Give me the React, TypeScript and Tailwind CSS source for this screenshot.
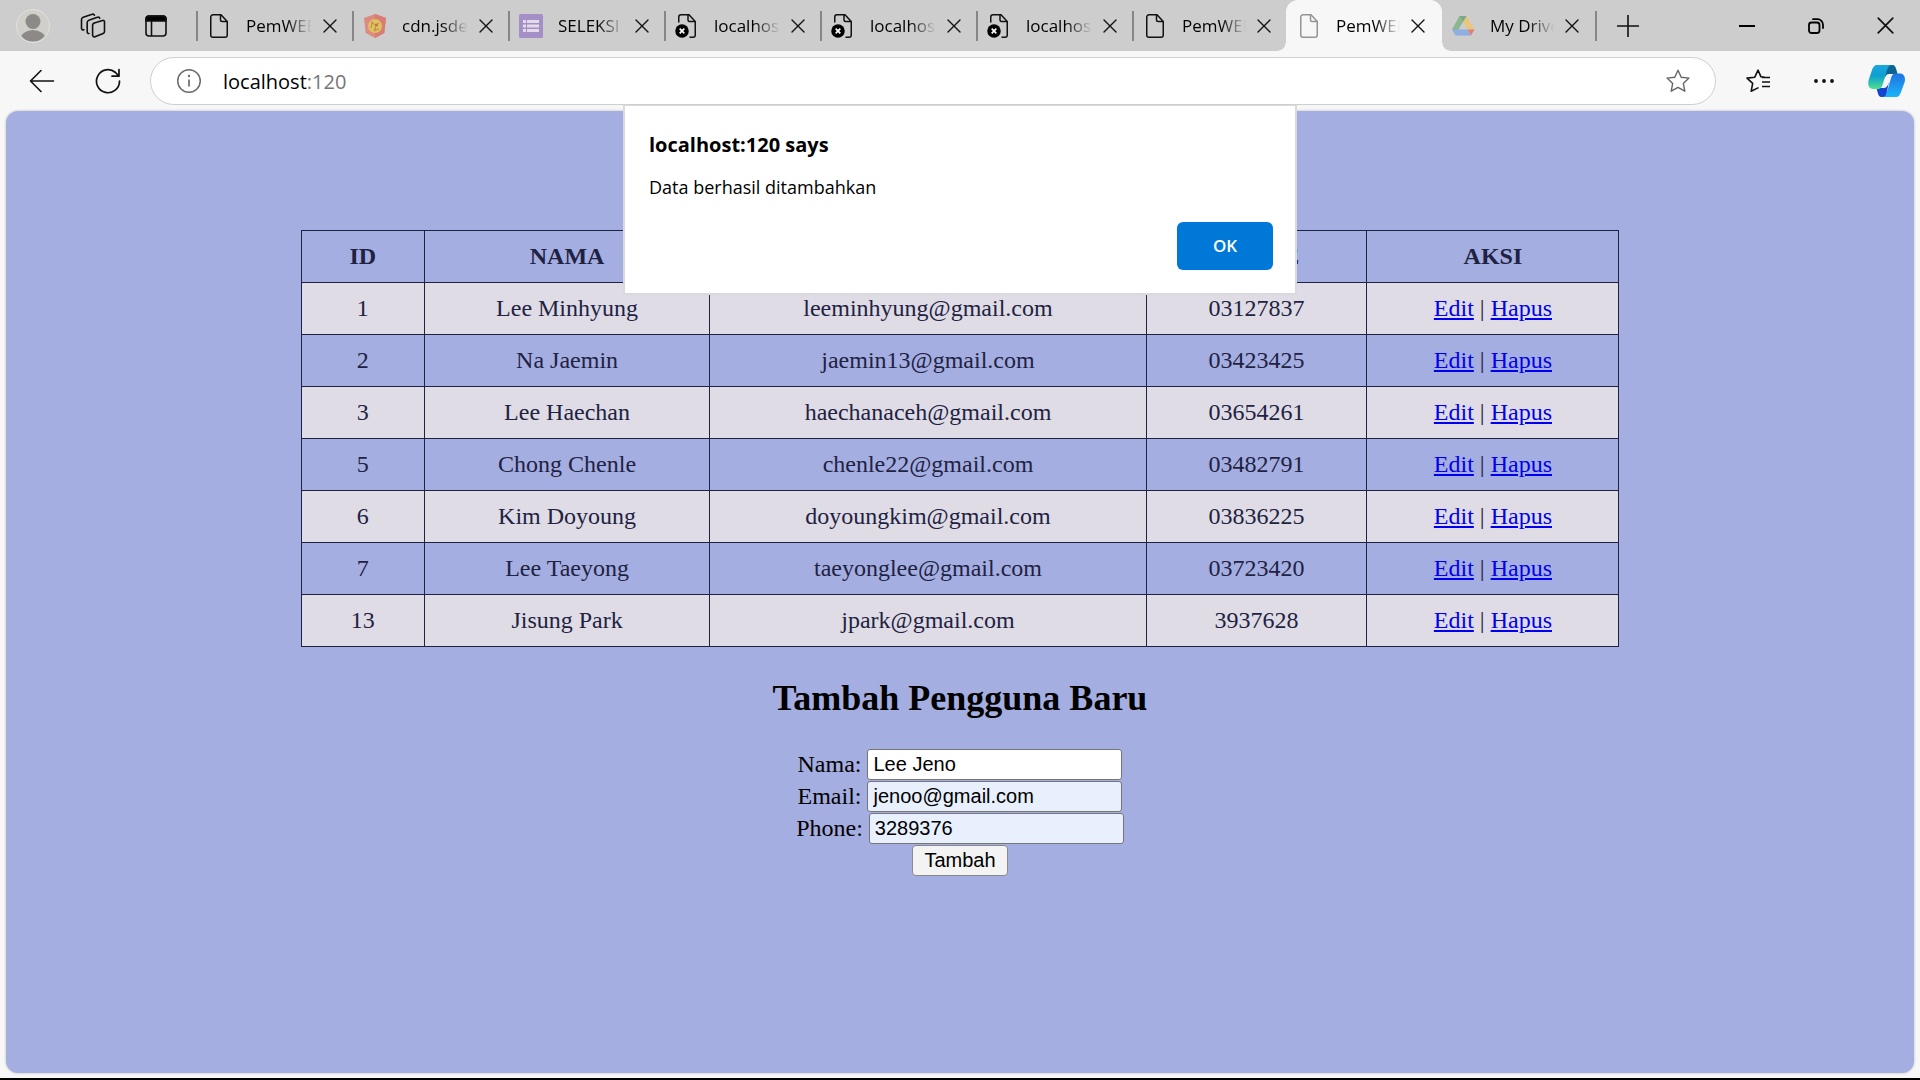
import React from "react";

type IconKind = "page" | "pageFaint" | "jsdelivr" | "forms" | "error" | "drive";
type Tab = { title: string; icon: IconKind; active?: boolean };
type User = { id: number; nama: string; email: string; phone: string };

const tabs: Tab[] = [
  { title: "PemWEB", icon: "page" },
  { title: "cdn.jsdelivr", icon: "jsdelivr" },
  { title: "SELEKSI A", icon: "forms" },
  { title: "localhost", icon: "error" },
  { title: "localhost", icon: "error" },
  { title: "localhost", icon: "error" },
  { title: "PemWEB", icon: "page" },
  { title: "PemWEB", icon: "pageFaint", active: true },
  { title: "My Drive", icon: "drive" },
];

const users: User[] = [
  { id: 1, nama: "Lee Minhyung", email: "leeminhyung@gmail.com", phone: "03127837" },
  { id: 2, nama: "Na Jaemin", email: "jaemin13@gmail.com", phone: "03423425" },
  { id: 3, nama: "Lee Haechan", email: "haechanaceh@gmail.com", phone: "03654261" },
  { id: 5, nama: "Chong Chenle", email: "chenle22@gmail.com", phone: "03482791" },
  { id: 6, nama: "Kim Doyoung", email: "doyoungkim@gmail.com", phone: "03836225" },
  { id: 7, nama: "Lee Taeyong", email: "taeyonglee@gmail.com", phone: "03723420" },
  { id: 13, nama: "Jisung Park", email: "jpark@gmail.com", phone: "3937628" },
];

function TabIcon({ kind }: { kind: IconKind }) {
  if (kind === "page" || kind === "pageFaint") {
    return (
      <svg width="24" height="24" viewBox="-3 0 24 24" fill="none" stroke={kind === "page" ? "#111" : "#949494"} strokeWidth="1.5" strokeLinejoin="round">
        <path d="M3 .75h8L17.250 7.500V21a2.250 2.250 0 0 1-2.250 2.250H3A2.250 2.250 0 0 1 .75 21V3A2.250 2.250 0 0 1 3 .75z" />
        <path d="M10.500 .75V6a1.500 1.500 0 0 0 1.500 1.500h5.250" />
      </svg>
    );
  }
  if (kind === "error") {
    return (
      <svg width="24" height="24" viewBox="0 0 24 24" fill="none" stroke="#111" strokeWidth="1.500" strokeLinejoin="round">
        <path d="M3.750 8.500V3A2.250 2.250 0 0 1 6 .75h8L20.250 7.500v13.500A2.250 2.250 0 0 1 18 23.250h-3.500" />
        <path d="M13 .75V6a1.500 1.500 0 0 0 1.500 1.500h5.500" />
        <circle cx="7" cy="17" r="6.750" fill="#000" stroke="none" />
        <path d="M4.700 14.700l4.600 4.600M9.300 14.700l-4.600 4.600" stroke="#fff" strokeWidth="1.700" />
      </svg>
    );
  }
  if (kind === "jsdelivr") {
    return (
      <svg width="24" height="24" viewBox="0 0 24 24">
        <path d="M12 0l11 4-1.700 15L12 24 2.700 19 1 4z" fill="#dd8a80" />
        <path d="M12 0l11 4-1.700 15L12 24z" fill="#d97c75" />
        <circle cx="12" cy="12" r="7" fill="#dfc15f" />
        <path d="M9 9l4 2 3-2M13 11l-1 5M9 9l-1 5M12 16l4-1" stroke="#c08d48" strokeWidth="1" fill="none" />
        <circle cx="13.500" cy="11" r="1.500" fill="#b57d45" />
        <circle cx="9" cy="8.500" r="1" fill="#c4934d" />
        <circle cx="12" cy="16" r="1.300" fill="#c4934d" />
      </svg>
    );
  }
  if (kind === "forms") {
    return (
      <svg width="24" height="24" viewBox="0 0 24 24">
        <rect width="24" height="24" rx="1.500" fill="#a48fc6" />
        <path d="M4 6h3v3H4zM8 6h12v3H8zM4 10.500h3v3H4zM8 10.500h12v3H8zM4 15h3v3H4zM8 15h12v3H8z" fill="#e2dcea" />
      </svg>
    );
  }
  return (
    <svg width="24" height="24" viewBox="0 0 24 24">
      <path d="M8.500 2h7l-9 19L1 15.500z" fill="#88b792" />
      <path d="M8.500 2h7l8 13.500h-7z" fill="#e9c67c" />
      <path d="M8.500 2h7L12 8z" fill="#7ba886" />
      <path d="M12 8l4.500 7.500h-9z" fill="#cdcdcd" />
      <path d="M1 15.500h15.500L20 21.500H4.500z" fill="#8faee2" />
      <path d="M16.500 15.500h7L20 21.500z" fill="#dd8078" />
    </svg>
  );
}

function CloseIcon({ size = 14 }: { size?: number }) {
  return (
    <svg width={size} height={size} viewBox="0 0 14 14" stroke="#111" strokeWidth="1.400" strokeLinecap="round">
      <path d="M1 1l12 12M13 1L1 13" />
    </svg>
  );
}

function TabItem({ tab, beforeActive, last }: { tab: Tab; beforeActive: boolean; last: boolean }) {
  const compact = tab.active || beforeActive || last;
  return (
    <div
      className={
        tab.active
          ? "relative flex h-full w-[156px] items-center rounded-t-xl bg-[#f7f7f7] pl-[11px]"
          : beforeActive
            ? "flex h-full w-[152px] items-center pl-[9px]"
            : last
              ? "flex h-full w-[155px] items-center pl-[9px]"
              : "flex h-full w-[156px] items-center pl-[9px]"
      }
    >
      {tab.active && (
        <>
          <span className="absolute bottom-0 -left-2 size-2 bg-[radial-gradient(circle_at_0_0,transparent_7px,#f7f7f7_8px)]" />
          <span className="absolute -right-2 bottom-0 size-2 bg-[radial-gradient(circle_at_100%_0,transparent_7px,#f7f7f7_8px)]" />
        </>
      )}
      <TabIcon kind={tab.icon} />
      <span
        className={
          compact
            ? "ml-[15px] w-16 overflow-hidden text-[17px] leading-6 whitespace-nowrap [mask-image:linear-gradient(to_right,black_60%,transparent)]"
            : "ml-[15px] w-[66px] overflow-hidden text-[17px] leading-6 whitespace-nowrap [mask-image:linear-gradient(to_right,black_60%,transparent)]"
        }
      >
        {tab.title}
      </span>
      <button aria-label="Close tab" className="ml-2.5 flex size-4 items-center justify-center">
        <CloseIcon />
      </button>
      {!tab.active && !beforeActive && <span className="ml-auto h-[30px] w-0.5 bg-[#868686]" />}
    </div>
  );
}

function TitleBar() {
  return (
    <div className="flex h-[51px] items-center bg-[#cdcdcd]">
      <button aria-label="Profile" className="ml-4">
        <svg width="34" height="34" viewBox="0 0 34 34">
          <defs>
            <clipPath id="avatar"><circle cx="17" cy="17" r="15.500" /></clipPath>
          </defs>
          <circle cx="17" cy="17" r="16.500" fill="#d0cfca" stroke="#e2e1dd" />
          <g clipPath="url(#avatar)" fill="#8d8986">
            <circle cx="17" cy="12.500" r="7.500" />
            <ellipse cx="17" cy="30" rx="12.500" ry="9" />
          </g>
        </svg>
      </button>
      <button aria-label="Workspaces" className="ml-[30px]">
        <svg width="26" height="26" viewBox="0 0 26 26" fill="none" stroke="#111" strokeWidth="1.600" strokeLinejoin="round" strokeLinecap="round">
          <path d="M13.500 10.200l9-2.700a1.500 1.500 0 0 1 2 1.500v9.500a2 2 0 0 1-1.400 1.900l-8.100 3.300a1.700 1.700 0 0 1-2.400-1.600V12.200a2 2 0 0 1 1.400-2z" />
          <path d="M9 20.500a1.600 1.600 0 0 1-1.800-1.700V9.500a2.500 2.500 0 0 1 1.700-2.300l8.500-3a1.700 1.700 0 0 1 2.300 1" />
          <path d="M3.800 16.700A1.600 1.600 0 0 1 1.500 15V6.500a2.500 2.500 0 0 1 1.700-2.300l9-2.900a1.700 1.700 0 0 1 2.200.9" />
        </svg>
      </button>
      <button aria-label="Tab actions" className="ml-[39px]">
        <svg width="22" height="22" viewBox="0 0 22 22" fill="none" stroke="#111" strokeWidth="1.600">
          <rect x="1" y="1" width="20" height="20" rx="3" />
          <path d="M1 6V4a3 3 0 0 1 3-3h14a3 3 0 0 1 3 3v2z" fill="#000" />
          <path d="M6.500 6v15" />
        </svg>
      </button>
      <span className="ml-[29px] h-[30px] w-0.5 bg-[#868686]" />
      <div className="flex h-full items-center">
        {tabs.map((tab, i) => (
          <TabItem key={i} tab={tab} beforeActive={!!tabs[i + 1]?.active} last={i === tabs.length - 1} />
        ))}
      </div>
      <button aria-label="New tab" className="ml-5">
        <svg width="22" height="22" viewBox="0 0 22 22" stroke="#111" strokeWidth="1.600"><path d="M11 0v22M0 11h22" /></svg>
      </button>
      <div className="ml-auto flex items-center gap-[53px] pr-[26px]">
        <button aria-label="Minimize">
          <svg width="16" height="16" viewBox="0 0 16 16" stroke="#000" strokeWidth="2"><path d="M0 8h16" /></svg>
        </button>
        <button aria-label="Restore">
          <svg width="16" height="16" viewBox="0 0 16 16" fill="none" stroke="#000" strokeWidth="1.800" strokeLinecap="round">
            <rect x="1" y="4.500" width="10.500" height="10.500" rx="2.500" />
            <path d="M5 1.200h4.500a5.500 5.500 0 0 1 5.500 5.500V10" />
          </svg>
        </button>
        <button aria-label="Close window"><CloseIcon size={17} /></button>
      </div>
    </div>
  );
}

function Toolbar() {
  return (
    <div className="flex h-[60px] items-center pr-[15px] pl-[29px]">
      <button aria-label="Back">
        <svg width="26" height="24" viewBox="0 0 26 24" fill="none" stroke="#111" strokeWidth="1.600" strokeLinecap="round" strokeLinejoin="round">
          <path d="M12 1.500L1.500 12 12 22.500M1.500 12H24.500" />
        </svg>
      </button>
      <button aria-label="Refresh" className="ml-10">
        <svg width="26" height="26" viewBox="0 0 26 26" fill="none" stroke="#111" strokeWidth="1.700" strokeLinecap="round" strokeLinejoin="round">
          <path d="M24.500 13A11.500 11.500 0 1 1 20.500 4.500L24 8.200M24 1.500v6.700h-7" />
        </svg>
      </button>
      <div className="ml-[29px] flex h-12 flex-1 items-center rounded-full border border-[#cfcfcf] bg-white pr-[25px] pl-[26px]">
        <button aria-label="Site information">
          <svg width="24" height="24" viewBox="0 0 24 24" fill="none" stroke="#6b6b6b" strokeWidth="1.500">
            <circle cx="12" cy="12" r="11.250" />
            <path d="M12 10.500v7" strokeWidth="1.700" />
            <circle cx="12" cy="7" r="1.200" fill="#6b6b6b" stroke="none" />
          </svg>
        </button>
        <div className="ml-[22px] flex-1 pt-0.5 text-[20px] leading-7 text-black">
          localhost<span className="text-[#767676]">:120</span>
        </div>
        <button aria-label="Add to favorites">
          <svg width="24" height="24" viewBox="0 0 24 24" fill="none" stroke="#666" strokeWidth="1.400" strokeLinejoin="round">
            <path d="M12 1.200l3.200 7 7.800.9-5.700 5.300 1.500 7.800L12 18.400l-6.800 3.800 1.500-7.800L1 9.100l7.800-.9z" />
          </svg>
        </button>
      </div>
      <button aria-label="Favorites" className="ml-[30px]">
        <svg width="25" height="24" viewBox="0 0 25 24" fill="none" stroke="#111" strokeWidth="1.600" strokeLinejoin="round" strokeLinecap="round">
          <path d="M18 8.200l-3-.4-3-6.600-3.200 7-7.800.9 5.700 5.300-1.500 7.800L12 18.900" />
          <path d="M16 8.500h8M16 13h8M16 17.500h8" strokeLinecap="butt" />
        </svg>
      </button>
      <button aria-label="Settings and more" className="ml-[43px]">
        <svg width="20" height="24" viewBox="0 0 20 24" fill="#111">
          <circle cx="2" cy="12" r="1.900" /><circle cx="10" cy="12" r="1.900" /><circle cx="18" cy="12" r="1.900" />
        </svg>
      </button>
      <button aria-label="Copilot" className="ml-[34px]">
        <svg width="37" height="34" viewBox="0 0 37 34">
          <defs>
            <linearGradient id="cpLeft" x1="0" y1="0" x2="0" y2="1">
              <stop offset="0" stopColor="#1ba5e0" /><stop offset=".45" stopColor="#0c9fd0" /><stop offset="1" stopColor="#4fe08f" />
            </linearGradient>
            <linearGradient id="cpRight" x1="0" y1="0" x2="0" y2="1">
              <stop offset="0" stopColor="#2173e0" /><stop offset="1" stopColor="#19b4fa" />
            </linearGradient>
          </defs>
          <path d="M19 1h5c3 0 3.500 2 4.500 5l1 4H21c-3 0-4 3-5 7z" fill="#0b6491" />
          <path d="M18 33h-4c-3 0-3.500-2-4.500-5l-1-4H16c3 0 4-3 5-7z" fill="#1344d2" />
          <path d="M9 1h15c-3 0-4 2-5 5l-4.500 15c-.8 2.500-2 4-4.500 4H5C1 25-1 21 1 15L4 6c1-3 2.500-5 5-5z" fill="url(#cpLeft)" />
          <path d="M28 33H14c3 0 4-2 5-5l4-14c.8-2.500 2-4.500 4.500-4.500H32c4 0 6 4 4.500 9L33 28c-1 3-2.500 5-5 5z" fill="url(#cpRight)" />
        </svg>
      </button>
    </div>
  );
}

function Field({ id, label, value, type = "text", filled }: { id: string; label: string; value: string; type?: string; filled?: boolean }) {
  return (
    <div className="flex h-8 items-center justify-center gap-1.5">
      <label htmlFor={id}>{label}</label>
      <input
        id={id}
        type={type}
        defaultValue={value}
        className={
          filled
            ? "h-[31px] w-[255px] rounded-[3px] border border-[#767676] bg-[#e8f0fe] px-[5px] font-['Liberation_Sans',sans-serif] text-[20px]"
            : "h-[31px] w-[255px] rounded-[3px] border border-[#767676] bg-white px-[5px] font-['Liberation_Sans',sans-serif] text-[20px]"
        }
      />
    </div>
  );
}

function AlertDialog() {
  return (
    <div
      role="alertdialog"
      aria-labelledby="alert-title"
      aria-describedby="alert-text"
      className="absolute top-[105px] left-1/2 flex w-[674px] -translate-x-1/2 flex-col border-2 border-t border-[#d9d9de] bg-white pt-[25px] pr-[22px] pb-[23px] pl-6"
    >
      <h1 id="alert-title" className="text-[20px] leading-7 font-bold">localhost:120 says</h1>
      <p id="alert-text" className="mt-3.5 text-[18px] leading-7">Data berhasil ditambahkan</p>
      <button className="mt-[21px] h-12 w-24 self-end rounded-md bg-[#0078d7] text-[17px] font-semibold text-white">OK</button>
    </div>
  );
}

export default function App() {
  return (
    <div className="relative flex min-h-screen flex-col border-b-2 border-black bg-[#f7f7f7] font-['Open_Sans',sans-serif] text-black">
      <TitleBar />
      <Toolbar />
      <main className="mx-1.5 mb-[5px] flex-1 rounded-xl bg-[#a5aee1] px-3 pt-[119px] font-['Liberation_Serif',serif] text-[24px] leading-[27px] shadow-[0_0_2px_1px_rgba(0,0,0,0.12)]">
        <table className="mx-auto w-[70%] border-collapse text-center text-[#1e2243]">
          <thead>
            <tr>
              {["ID", "NAMA", "EMAIL", "PHONE", "AKSI"].map((h) => (
                <th key={h} className="border border-[#1e2243] px-[30px] py-3 font-bold">{h}</th>
              ))}
            </tr>
          </thead>
          <tbody>
            {users.map((u) => (
              <tr key={u.id} className="odd:bg-[#dfdce5]">
                <td className="border border-[#1e2243] px-[30px] py-3">{u.id}</td>
                <td className="border border-[#1e2243] px-[30px] py-3">{u.nama}</td>
                <td className="border border-[#1e2243] px-[30px] py-3">{u.email}</td>
                <td className="border border-[#1e2243] px-[30px] py-3">{u.phone}</td>
                <td className="border border-[#1e2243] px-[30px] py-3">
                  <a href="#edit" className="text-[#0000ee] underline">Edit</a> | <a href="#hapus" className="text-[#0000ee] underline">Hapus</a>
                </td>
              </tr>
            ))}
          </tbody>
        </table>
        <h2 className="mt-[30px] mb-[29px] text-center text-[36px] leading-[42px] font-bold">Tambah Pengguna Baru</h2>
        <form onSubmit={(e) => e.preventDefault()}>
          <Field id="nama" label="Nama:" value="Lee Jeno" />
          <Field id="email" label="Email:" value="jenoo@gmail.com" type="email" filled />
          <Field id="phone" label="Phone:" value="3289376" filled />
          <div className="flex h-8 items-center justify-center">
            <button type="submit" className="h-[31px] rounded-[4px] border border-[#8a8a8a] bg-[#f3f3f3] px-[11px] font-['Liberation_Sans',sans-serif] text-[20px] leading-6">
              Tambah
            </button>
          </div>
        </form>
      </main>
      <AlertDialog />
    </div>
  );
}
